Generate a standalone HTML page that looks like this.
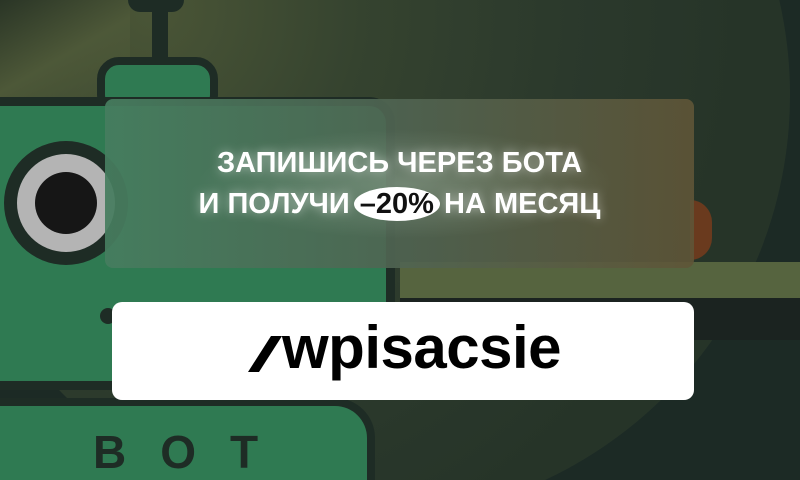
<!DOCTYPE html>
<html><head><meta charset="utf-8"><style>
html,body{margin:0;width:800px;height:480px;overflow:hidden}
body{background:#1c2a25;font-family:"Liberation Sans",sans-serif;position:relative}
.a{position:absolute}
#w{position:absolute;left:0;top:0;width:800px;height:480px;overflow:hidden}
</style></head><body><div id="w">
<svg class="a" style="left:0;top:0" width="800" height="480">
<defs><radialGradient id="g" cx="0.25" cy="0.4" r="0.7"><stop offset="0" stop-color="#4a5536"/><stop offset="0.35" stop-color="#35432f"/><stop offset="0.7" stop-color="#2b392c"/><stop offset="1" stop-color="#263428"/></radialGradient></defs>
<circle cx="365" cy="95" r="425" fill="url(#g)"/>
</svg>
<div class="a" style="left:0;top:0;width:130px;height:110px;background:linear-gradient(150deg,#2a3526,#4d5838 50%,transparent)"></div>
<div class="a" style="left:690px;top:200px;width:22px;height:60px;border-radius:0 30px 30px 0;background:#6a3a1e"></div>
<div class="a" style="left:400px;top:262px;width:400px;height:36px;background:#56643f"></div>
<div class="a" style="left:400px;top:298px;width:400px;height:42px;background:#1b2320"></div>
<div class="a" style="left:128px;top:0;width:56px;height:12px;border-radius:0 0 28px 28px;background:#1e2c25"></div>
<div class="a" style="left:152px;top:0;width:16px;height:62px;background:#1e2c25"></div>
<div class="a" style="left:97px;top:57px;width:121px;height:60px;border-radius:22px;background:#2f7a52;border:8px solid #1e2c25;box-sizing:border-box"></div>
<div class="a" style="left:0;top:97px;width:395px;height:293px;border-radius:0 26px 26px 0;background:#2f7a52;border:9px solid #1e2c25;border-left:0;box-sizing:border-box"></div>
<div class="a" style="left:4px;top:141px;width:124px;height:124px;border-radius:50%;background:#1e2c25"></div>
<div class="a" style="left:17px;top:154px;width:98px;height:98px;border-radius:50%;background:#b4b4b4"></div>
<div class="a" style="left:35px;top:172px;width:62px;height:62px;border-radius:50%;background:#161616"></div>
<div class="a" style="left:100px;top:308px;width:16px;height:16px;border-radius:50%;background:#1e2c25"></div>
<div class="a" style="left:0;top:398px;width:375px;height:82px;border-radius:0 40px 0 0;background:#2f7a52;border:8px solid #1e2c25;border-left:0;border-bottom:0;box-sizing:border-box"></div>
<div class="a" style="left:93px;top:430px;font-size:46px;font-weight:900;color:#1e2c25;letter-spacing:34px;line-height:44px;height:44px">BOT</div>
<div class="a" style="left:105px;top:99px;width:589px;height:169px;border-radius:8px;background:linear-gradient(90deg,rgba(70,125,95,0.93),rgba(80,100,82,0.9) 50%,rgba(95,85,55,0.9));overflow:hidden">
<div class="a" style="left:90px;top:30px;width:420px;height:110px;border-radius:50%;background:radial-gradient(ellipse,rgba(200,220,200,0.3),transparent 70%)"></div>
</div>
<div class="a" style="left:105px;top:143px;width:589px;text-align:center;color:#fff;font-weight:bold;font-size:29px;line-height:41px;text-shadow:0 0 10px rgba(255,255,255,0.5)">ЗАПИШИСЬ ЧЕРЕЗ БОТА<br>И ПОЛУЧИ <span style="display:inline-block;background:#fff;color:#111;border-radius:50%;padding:0 6px;line-height:34px;text-shadow:none;margin:0 -4px">–20%</span> НА МЕСЯЦ</div>
<div class="a" style="left:112px;top:302px;width:582px;height:98px;border-radius:10px;background:#fff"></div>
<svg class="a" style="left:246px;top:334px" width="40" height="40"><polygon points="25,2 36,2 13,38 2,38" fill="#000"/></svg>
<div class="a" style="left:282px;top:313px;font-size:60px;font-weight:900;color:#000;letter-spacing:-0.5px;line-height:70px">wpisacsie</div>
</div></body></html>
